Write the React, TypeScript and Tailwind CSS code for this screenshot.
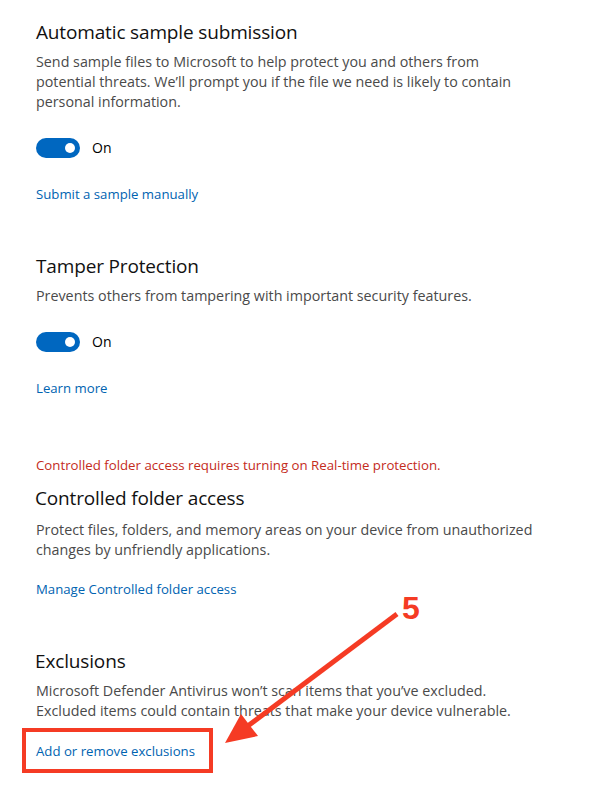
const font = { fontFamily: '"Open Sans", "Noto Sans", sans-serif' };

function Toggle() {
  return (
    <div className="flex items-center h-5">
      <div className="w-[44px] h-5 rounded-full bg-[#0067c0] flex items-center justify-end pr-[5px]">
        <div className="w-[10px] h-[10px] rounded-full bg-white" />
      </div>
      <span className="ml-3 text-[14px] leading-5 text-black">On</span>
    </div>
  );
}

function Heading({ children, className = '' }: { children: React.ReactNode; className?: string }) {
  return (
    <h2 className={`text-[19px] leading-[28px] tracking-[-0.15px] text-[#111] font-normal ${className}`}>{children}</h2>
  );
}

function Para({ children, className = '' }: { children: React.ReactNode; className?: string }) {
  return <p className={`text-[14.3px] leading-5 text-[#4a4a4a] ${className}`}>{children}</p>;
}

function LinkText({ children, className = '' }: { children: React.ReactNode; className?: string }) {
  return <a className={`block text-[13.2px] leading-5 text-[#0063b1] cursor-pointer ${className}`}>{children}</a>;
}

export default function App() {
  return (
    <div className="relative w-[589px] h-[802px] bg-white overflow-hidden" style={font}>
      <div className="pl-[36px] pr-6 pt-[18px]">
        <Heading>Automatic sample submission</Heading>
        <Para className="mt-[6px] w-[480px]">
          Send sample files to Microsoft to help protect you and others from potential threats. We’ll prompt you if
          the file we need is likely to contain personal information.
        </Para>
        <div className="mt-[26px]">
          <Toggle />
        </div>
        <LinkText className="mt-[26px]">Submit a sample manually</LinkText>

        <Heading className="mt-[48px]">Tamper Protection</Heading>
        <Para className="mt-[6px]">Prevents others from tampering with important security features.</Para>
        <div className="mt-[26px]">
          <Toggle />
        </div>
        <LinkText className="mt-[26px]">Learn more</LinkText>

        <p className="mt-[57px] text-[13.25px] leading-5 text-[#c42b1c]">
          Controlled folder access requires turning on Real-time protection.
        </p>
        <Heading className="mt-[9px] -ml-px">Controlled folder access</Heading>
        <Para className="mt-[8px] w-[500px]">
          Protect files, folders, and memory areas on your device from unauthorized changes by unfriendly applications.
        </Para>
        <LinkText className="mt-[19px]">Manage Controlled folder access</LinkText>

        <Heading className="mt-[48px] -ml-px">Exclusions</Heading>
        <Para className="mt-[6px] w-[485px]">
          Microsoft Defender Antivirus won’t scan items that you’ve excluded. Excluded items could contain threats that
          make your device vulnerable.
        </Para>
        <div className="mt-[7px] -ml-[14px] w-[191px] border-4 border-[#f53b24] pl-[10px] pt-[9px] pb-[8px]">
          <LinkText>Add or remove exclusions</LinkText>
        </div>
      </div>

      {/* annotation */}
      <span
        className="absolute left-[402px] top-[590px] text-[32px] leading-[36px] font-bold text-[#f53b24]"
        style={{ fontFamily: '"Liberation Sans", Arial, sans-serif' }}
      >
        5
      </span>
      <svg className="absolute left-0 top-0" width="589" height="802" viewBox="0 0 589 802">
        <line x1="397" y1="614" x2="245" y2="728" stroke="#f53b24" strokeWidth="5" strokeLinecap="butt" />
        <polygon points="225,743 241,714 258,736" fill="#f53b24" />
      </svg>
    </div>
  );
}
